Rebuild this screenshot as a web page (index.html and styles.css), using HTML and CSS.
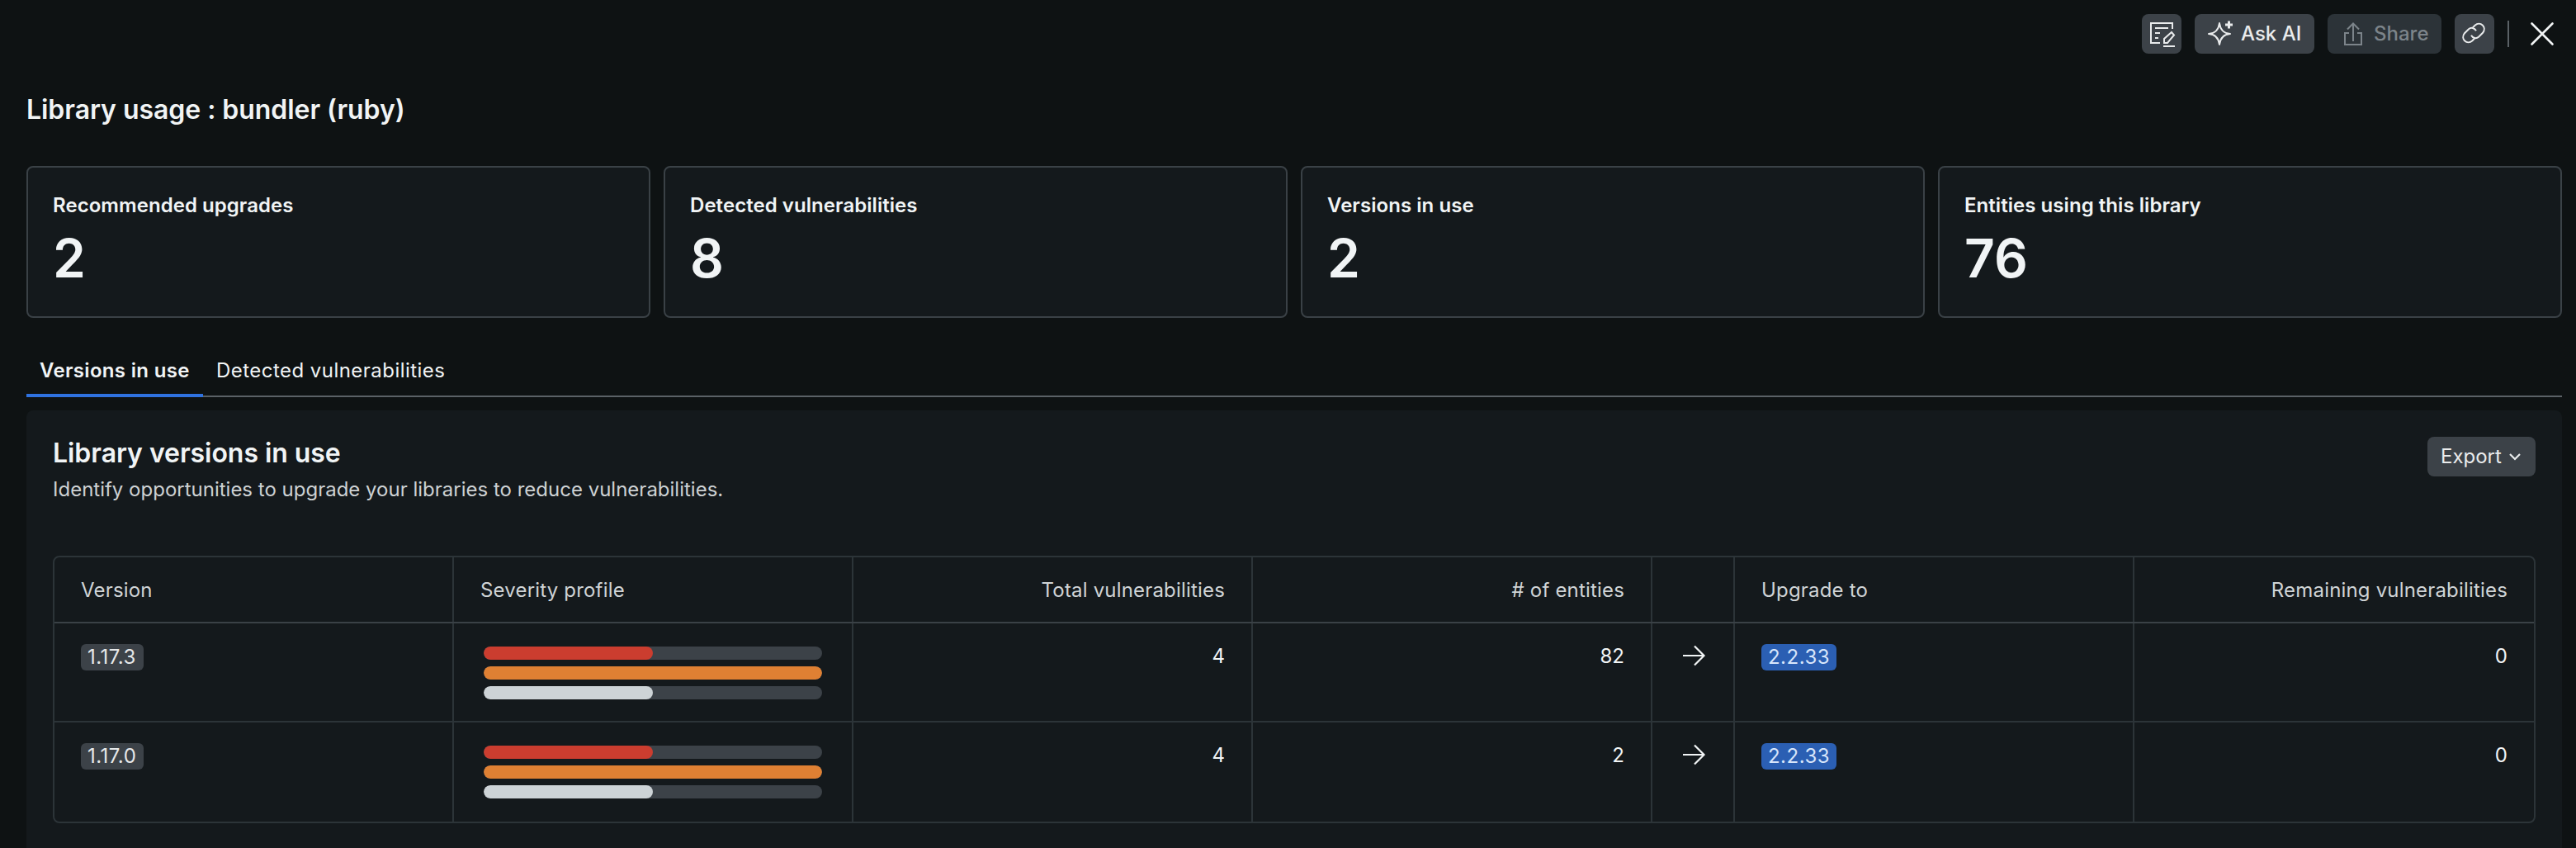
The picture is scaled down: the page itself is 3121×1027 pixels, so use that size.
FILE: index.html
```html
<!DOCTYPE html>
<html lang="en">
<head>
<meta charset="utf-8">
<title>Library usage</title>
<link rel="stylesheet" href="styles.css">
</head>
<body>
<header class="toolbar">
  <button class="btn btn-icon" aria-label="Notes">
    <svg width="32" height="32" viewBox="0 0 32 32" fill="none" stroke="currentColor" stroke-width="2">
      <path d="M14 27H3V3h26v7M8 9h16M8 15h6M8 21h4M18 31h14M19 27v-5l9-8 3 3.500-8 9.500z"/>
    </svg>
  </button>
  <button class="btn btn-ask">
    <svg width="32" height="32" viewBox="0 0 32 32" fill="none" stroke="currentColor" stroke-width="2" stroke-linejoin="round">
      <path d="M15 3c1 8 5.500 12.500 13 13-7.500.5-12 5-13 13-1-8-5.500-12.500-13-13 7.500-.5 12-5 13-13z"/>
      <path d="M26.500 .5v9M22 5h9" stroke-width="3"/>
    </svg>
    <span>Ask AI</span>
  </button>
  <button class="btn btn-share" disabled>
    <svg width="32" height="32" viewBox="0 0 32 32" fill="none" stroke="currentColor" stroke-width="2">
      <path d="M11 15H6v14h20V15h-5M16 25V4M9 10.500L16 3.500l7 7"/>
    </svg>
    <span>Share</span>
  </button>
  <button class="btn btn-icon" aria-label="Copy link">
    <svg width="32" height="32" viewBox="0 0 32 32" fill="none" stroke="currentColor" stroke-width="2">
      <path d="M14 8.500l2.500-2.700c6.500-6 15 2 9.500 9l-5 5c-3 2.500-7 1.500-9-2M16 21.500l-2.500 2.700c-6.500 6-15-2-9.500-9l5-5c3-2.500 7-1.500 9 2"/>
    </svg>
  </button>
  <span class="divider"></span>
  <button class="close" aria-label="Close">
    <svg width="32" height="32" viewBox="0 0 32 32" fill="none" stroke="currentColor" stroke-width="2.600" stroke-linecap="round"><path d="M3.500 3.500l25 25M28.500 3.500l-25 25"/></svg>
  </button>
</header>
<main class="page">
  <h1 class="title">Library usage : bundler (ruby)</h1>
  <section class="cards">
    <article class="card"><h2 class="card-label">Recommended upgrades</h2><p class="card-value">2</p></article>
    <article class="card"><h2 class="card-label">Detected vulnerabilities</h2><p class="card-value">8</p></article>
    <article class="card"><h2 class="card-label">Versions in use</h2><p class="card-value">2</p></article>
    <article class="card"><h2 class="card-label">Entities using this library</h2><p class="card-value">76</p></article>
  </section>
  <nav class="tabs">
    <a class="tab tab-active">Versions in use</a>
    <a class="tab">Detected vulnerabilities</a>
  </nav>
  <section class="panel">
    <div class="panel-head">
      <div>
        <h2 class="panel-title">Library versions in use</h2>
        <p class="panel-text">Identify opportunities to upgrade your libraries to reduce vulnerabilities.</p>
      </div>
      <button class="btn btn-export"><span>Export</span>
        <svg width="16" height="16" viewBox="0 0 16 16" fill="none" stroke="currentColor" stroke-width="2.200"><path d="M2 5l6 6 6-6"/></svg>
      </button>
    </div>
    <div class="table">
      <div class="row row-head">
        <div class="cell">Version</div>
        <div class="cell">Severity profile</div>
        <div class="cell num">Total vulnerabilities</div>
        <div class="cell num"># of entities</div>
        <div class="cell"></div>
        <div class="cell">Upgrade to</div>
        <div class="cell num">Remaining vulnerabilities</div>
      </div>
      <div class="row">
        <div class="cell"><span class="badge">1.17.3</span></div>
        <div class="cell bars">
          <div class="bar"><div class="fill critical" style="width:50%"></div></div>
          <div class="bar"><div class="fill high" style="width:100%"></div></div>
          <div class="bar"><div class="fill low" style="width:50%"></div></div>
        </div>
        <div class="cell num">4</div>
        <div class="cell num">82</div>
        <div class="cell arrow"><svg width="32" height="32" viewBox="0 0 32 32" fill="none" stroke="currentColor" stroke-width="2.200"><path d="M4 16h25M18 4.500L29.500 16 18 27.500"/></svg></div>
        <div class="cell"><span class="badge badge-blue">2.2.33</span></div>
        <div class="cell num">0</div>
      </div>
      <div class="row">
        <div class="cell"><span class="badge">1.17.0</span></div>
        <div class="cell bars">
          <div class="bar"><div class="fill critical" style="width:50%"></div></div>
          <div class="bar"><div class="fill high" style="width:100%"></div></div>
          <div class="bar"><div class="fill low" style="width:50%"></div></div>
        </div>
        <div class="cell num">4</div>
        <div class="cell num">2</div>
        <div class="cell arrow"><svg width="32" height="32" viewBox="0 0 32 32" fill="none" stroke="currentColor" stroke-width="2.200"><path d="M4 16h25M18 4.500L29.500 16 18 27.500"/></svg></div>
        <div class="cell"><span class="badge badge-blue">2.2.33</span></div>
        <div class="cell num">0</div>
      </div>
    </div>
  </section>
</main>
</body>
</html>
```
FILE: styles.css
```css
* { box-sizing: border-box; }
body {
  margin: 0;
  height: 1027px;
  overflow: hidden;
  background: #0e1213;
  color: #f1f4f5;
  font-family: Inter, "Liberation Sans", sans-serif;
  font-size: 24px;
  line-height: 32px;
  display: flex;
  flex-direction: column;
}
h1, h2, p { margin: 0; }
button { border: 0; margin: 0; padding: 0; background: none; color: inherit; font: inherit; }
svg { display: block; flex: none; overflow: visible; }

.toolbar {
  display: flex;
  justify-content: flex-end;
  align-items: center;
  gap: 16px;
  height: 65px;
  padding: 17px 25px 0 0;
}
.btn {
  display: flex;
  align-items: center;
  height: 48px;
  border-radius: 8px;
  background: #3c4248;
  color: #e9ebec;
}
.btn-icon { width: 48px; justify-content: center; }
.btn-ask { width: 145px; padding-left: 15px; gap: 9px; font-weight: 500; }
.btn-share { width: 138px; padding-left: 15px; gap: 9px; background: #2c3338; color: #7c848a; font-weight: 500; }
.divider { width: 2px; height: 32px; background: #5a6166; }
.close { width: 32px; height: 32px; margin-left: 8px; }

.page {
  flex: 1;
  min-height: 0;
  display: flex;
  flex-direction: column;
  padding: 48px 17px 0 32px;
}
.title { font-size: 32px; line-height: 40px; font-weight: 600; letter-spacing: -.05px; }
.cards { display: grid; grid-template-columns: repeat(4, 1fr); gap: 16px; margin-top: 48px; }
.card {
  height: 184px;
  padding: 30px;
  border: 2px solid #3a4146;
  border-radius: 8px;
  background: #14191c;
}
.card-label { font-size: 24px; line-height: 32px; font-weight: 600; letter-spacing: .05px; }
.card-value { font-size: 64px; line-height: 80px; font-weight: 600; margin-top: 8px; }

.tabs { display: flex; height: 64px; margin-top: 32px; box-shadow: inset 0 -2px #5a6166; }
.tab { padding: 16px 16px 0; letter-spacing: .46px; }
.tab-active { width: 214px; font-weight: 600; letter-spacing: .33px; white-space: nowrap; border-bottom: 4px solid #2f72e0; }

.panel {
  flex: 1;
  min-height: 0;
  margin-top: 16px;
  padding: 32px;
  border-radius: 8px 8px 0 0;
  background: #14191c;
}
.panel-head { display: flex; justify-content: space-between; height: 144px; }
.panel-title { font-size: 32px; line-height: 40px; font-weight: 600; letter-spacing: -.05px; }
.panel-text { color: #cdd1d3; margin-top: 8px; }
.btn-export { width: 131px; padding-left: 16px; gap: 8px; }

.table { border: 2px solid #2c3438; border-radius: 8px; }
.row {
  display: grid;
  grid-template-columns: repeat(4, 484px) 100px 484px 484px;
  height: 120px;
  border-bottom: 2px solid #2c3438;
}
.row:last-child { border-bottom: 0; }
.row-head { height: 80px; border-bottom-color: #3a4146; color: #d0d4d6; letter-spacing: .18px; }
.cell { padding: 24px 32px 0; border-right: 2px solid #2c3438; }
.cell:last-child { border-right: 0; }
.num { text-align: right; }
.bars { display: flex; flex-direction: column; gap: 8px; padding: 28px 36px 0; }
.bar { height: 16px; border-radius: 8px; background: #3c4248; overflow: hidden; }
.fill { height: 100%; border-radius: 8px; }
.critical { background: #cb3d2f; }
.high { background: #df8033; }
.low { background: #cdd3d6; }
.badge {
  display: inline-block;
  margin-top: 1px;
  padding: 0 9px 0 8px;
  border-radius: 6px;
  background: #3c4248;
  color: #e6e8e9;
  letter-spacing: .48px;
}
.badge-blue { padding: 0 8px; background: #2b5fb3; color: #d8e6fb; }
.arrow { padding: 23px 0 0 33px; }
```
